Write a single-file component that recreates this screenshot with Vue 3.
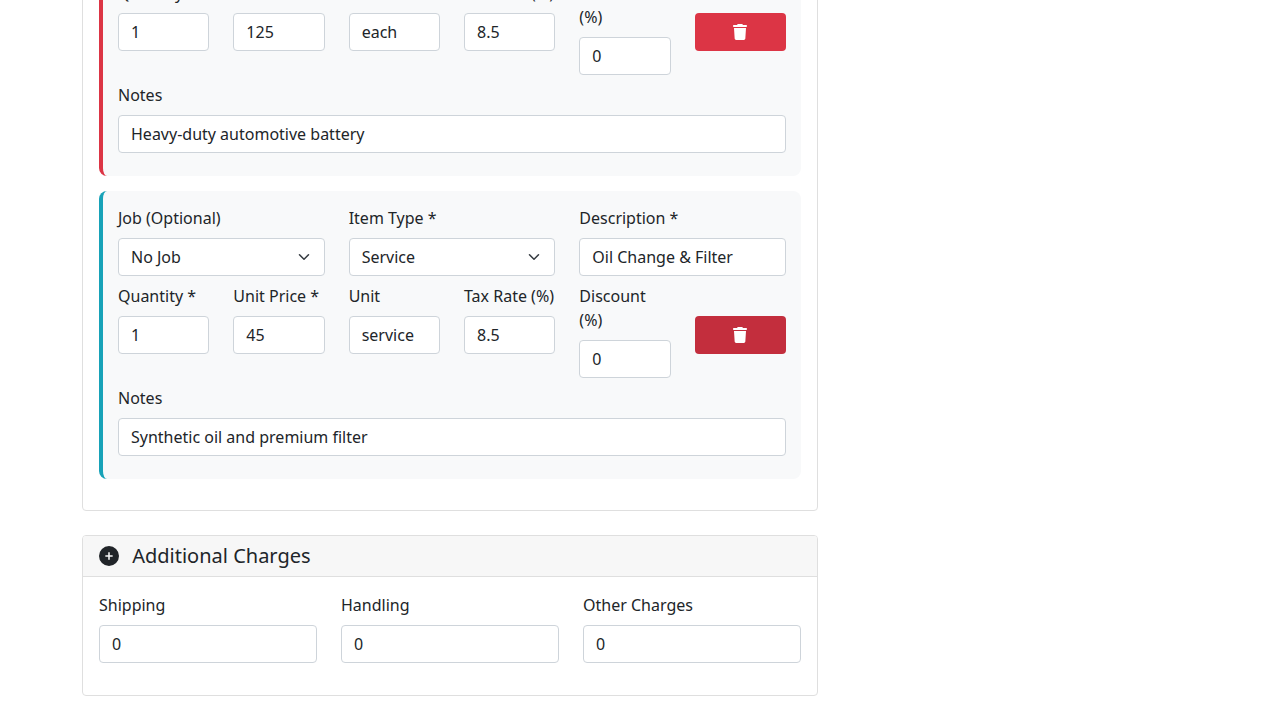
<script setup>
const items = [
  { accent: 'danger', job: 'No Job', type: 'Part', description: 'Car Battery', qty: '1', price: '125', unit: 'each', tax: '8.5', discount: '0', notes: 'Heavy-duty automotive battery', btn: '' },
  { accent: 'info', job: 'No Job', type: 'Service', description: 'Oil Change & Filter', qty: '1', price: '45', unit: 'service', tax: '8.5', discount: '0', notes: 'Synthetic oil and premium filter', btn: 'hover' }
]
const charges = [
  { label: 'Shipping', value: '0' },
  { label: 'Handling', value: '0' },
  { label: 'Other Charges', value: '0' }
]
</script>

<template>
  <div class="viewport">
    <main class="page">
      <section class="card items-card">
        <div class="items-body">
          <article v-for="item in items" :key="item.notes" class="item" :class="item.accent">
            <div class="row-3">
              <div class="field">
                <label>Job (Optional)</label>
                <div class="select-wrap">
                  <select class="control"><option>{{ item.job }}</option></select>
                  <svg class="chevron" viewBox="0 0 16 16" width="16" height="12"><path d="m2 5 6 6 6-6" fill="none" stroke="#343a40" stroke-width="2" stroke-linecap="round" stroke-linejoin="round"/></svg>
                </div>
              </div>
              <div class="field">
                <label>Item Type *</label>
                <div class="select-wrap">
                  <select class="control"><option>{{ item.type }}</option></select>
                  <svg class="chevron" viewBox="0 0 16 16" width="16" height="12"><path d="m2 5 6 6 6-6" fill="none" stroke="#343a40" stroke-width="2" stroke-linecap="round" stroke-linejoin="round"/></svg>
                </div>
              </div>
              <div class="field">
                <label>Description *</label>
                <input class="control" :value="item.description" />
              </div>
            </div>
            <div class="row-6">
              <div class="field"><label>Quantity *</label><input class="control" :value="item.qty" /></div>
              <div class="field"><label>Unit Price *</label><input class="control" :value="item.price" /></div>
              <div class="field"><label>Unit</label><input class="control" :value="item.unit" /></div>
              <div class="field"><label>Tax Rate (%)</label><input class="control" :value="item.tax" /></div>
              <div class="field"><label>Discount (%)</label><input class="control" :value="item.discount" /></div>
              <div class="action">
                <button class="delete" :class="item.btn" type="button" aria-label="Delete item">
                  <svg viewBox="0 0 448 512" width="14" height="16"><path fill="#fff" d="M135.2 17.7L128 32H32C14.3 32 0 46.3 0 64S14.3 96 32 96H416c17.7 0 32-14.3 32-32s-14.3-32-32-32H320l-7.2-14.3C307.4 6.8 296.3 0 284.2 0H163.8c-12.1 0-23.2 6.8-28.6 17.7zM416 128H32L53.2 467c1.6 25.3 22.6 45 47.9 45H346.9c25.3 0 46.3-19.7 47.9-45L416 128z"/></svg>
                </button>
              </div>
            </div>
            <div class="field notes">
              <label>Notes</label>
              <input class="control" :value="item.notes" />
            </div>
          </article>
        </div>
      </section>

      <section class="card charges-card">
        <header class="card-header">
          <svg viewBox="0 0 512 512" width="20" height="20"><path fill="#212529" d="M256 512A256 256 0 1 0 256 0a256 256 0 1 0 0 512zM236 336V276H176c-11 0-20-9-20-20s9-20 20-20h60V176c0-11 9-20 20-20s20 9 20 20v60h60c11 0 20 9 20 20s-9 20-20 20H276v60c0 11-9 20-20 20s-20-9-20-20z"/></svg>
          <h5>Additional Charges</h5>
        </header>
        <div class="charges-body">
          <div v-for="c in charges" :key="c.label" class="field">
            <label>{{ c.label }}</label>
            <input class="control" :value="c.value" />
          </div>
        </div>
      </section>
    </main>
  </div>
</template>

<style>
body { margin: 0; background: #fff; }
</style>

<style scoped>
.viewport {
  height: 720px;
  overflow: hidden;
  font-family: "Noto Sans", sans-serif;
  font-size: 16px;
  line-height: 24px;
  color: #212529;
}
.page {
  width: 736px;
  margin: -128px 0 0 82px;
}
.card {
  box-sizing: border-box;
  border: 1px solid #dfdfdf;
  border-radius: 4px;
  background: #fff;
}
.items-body {
  padding: 15px 16px 31px;
  display: flex;
  flex-direction: column;
  gap: 15px;
}
.item {
  box-sizing: border-box;
  height: 288px;
  padding: 15px 15px 0;
  background: #f8f9fa;
  border-left: 4px solid;
  border-radius: 8px;
}
.item.danger { border-left-color: #dc3545; }
.item.info { border-left-color: #17a2b8; }
.row-3 {
  display: grid;
  grid-template-columns: repeat(3, minmax(0, 1fr));
  column-gap: 24px;
  margin-bottom: 8px;
}
.row-6 {
  display: grid;
  grid-template-columns: repeat(6, minmax(0, 1fr));
  column-gap: 24px;
  margin-bottom: 8px;
}
.field { display: flex; flex-direction: column; }
.field label { display: block; margin-bottom: 8px; }
.control {
  box-sizing: border-box;
  display: block;
  width: 100%;
  height: 38px;
  padding: 6px 12px;
  font: inherit;
  color: #212529;
  background: #fff;
  border: 1px solid #ced4da;
  border-radius: 4px;
  appearance: none;
  outline: none;
}
.select-wrap { position: relative; }
.chevron {
  position: absolute;
  right: 13px;
  top: 13px;
  pointer-events: none;
}
.action { padding-top: 32px; }
.delete {
  display: flex;
  align-items: center;
  justify-content: center;
  width: 100%;
  height: 38px;
  padding: 0;
  border: 0;
  border-radius: 4px;
  background: #dc3545;
}
.delete.hover { background: #c32e3d; }
.charges-card {
  height: 161px;
  margin-top: 24px;
}
.card-header {
  box-sizing: border-box;
  height: 41px;
  padding: 0 16px;
  display: flex;
  align-items: center;
  gap: 13.2px;
  background: #f7f7f7;
  border-bottom: 1px solid #dfdfdf;
  border-radius: 3px 3px 0 0;
}
.card-header h5 {
  margin: 0;
  font-size: 20px;
  font-weight: 400;
  line-height: 24px;
}
.charges-body {
  padding: 16px;
  display: grid;
  grid-template-columns: repeat(3, minmax(0, 1fr));
  column-gap: 24px;
}
</style>
